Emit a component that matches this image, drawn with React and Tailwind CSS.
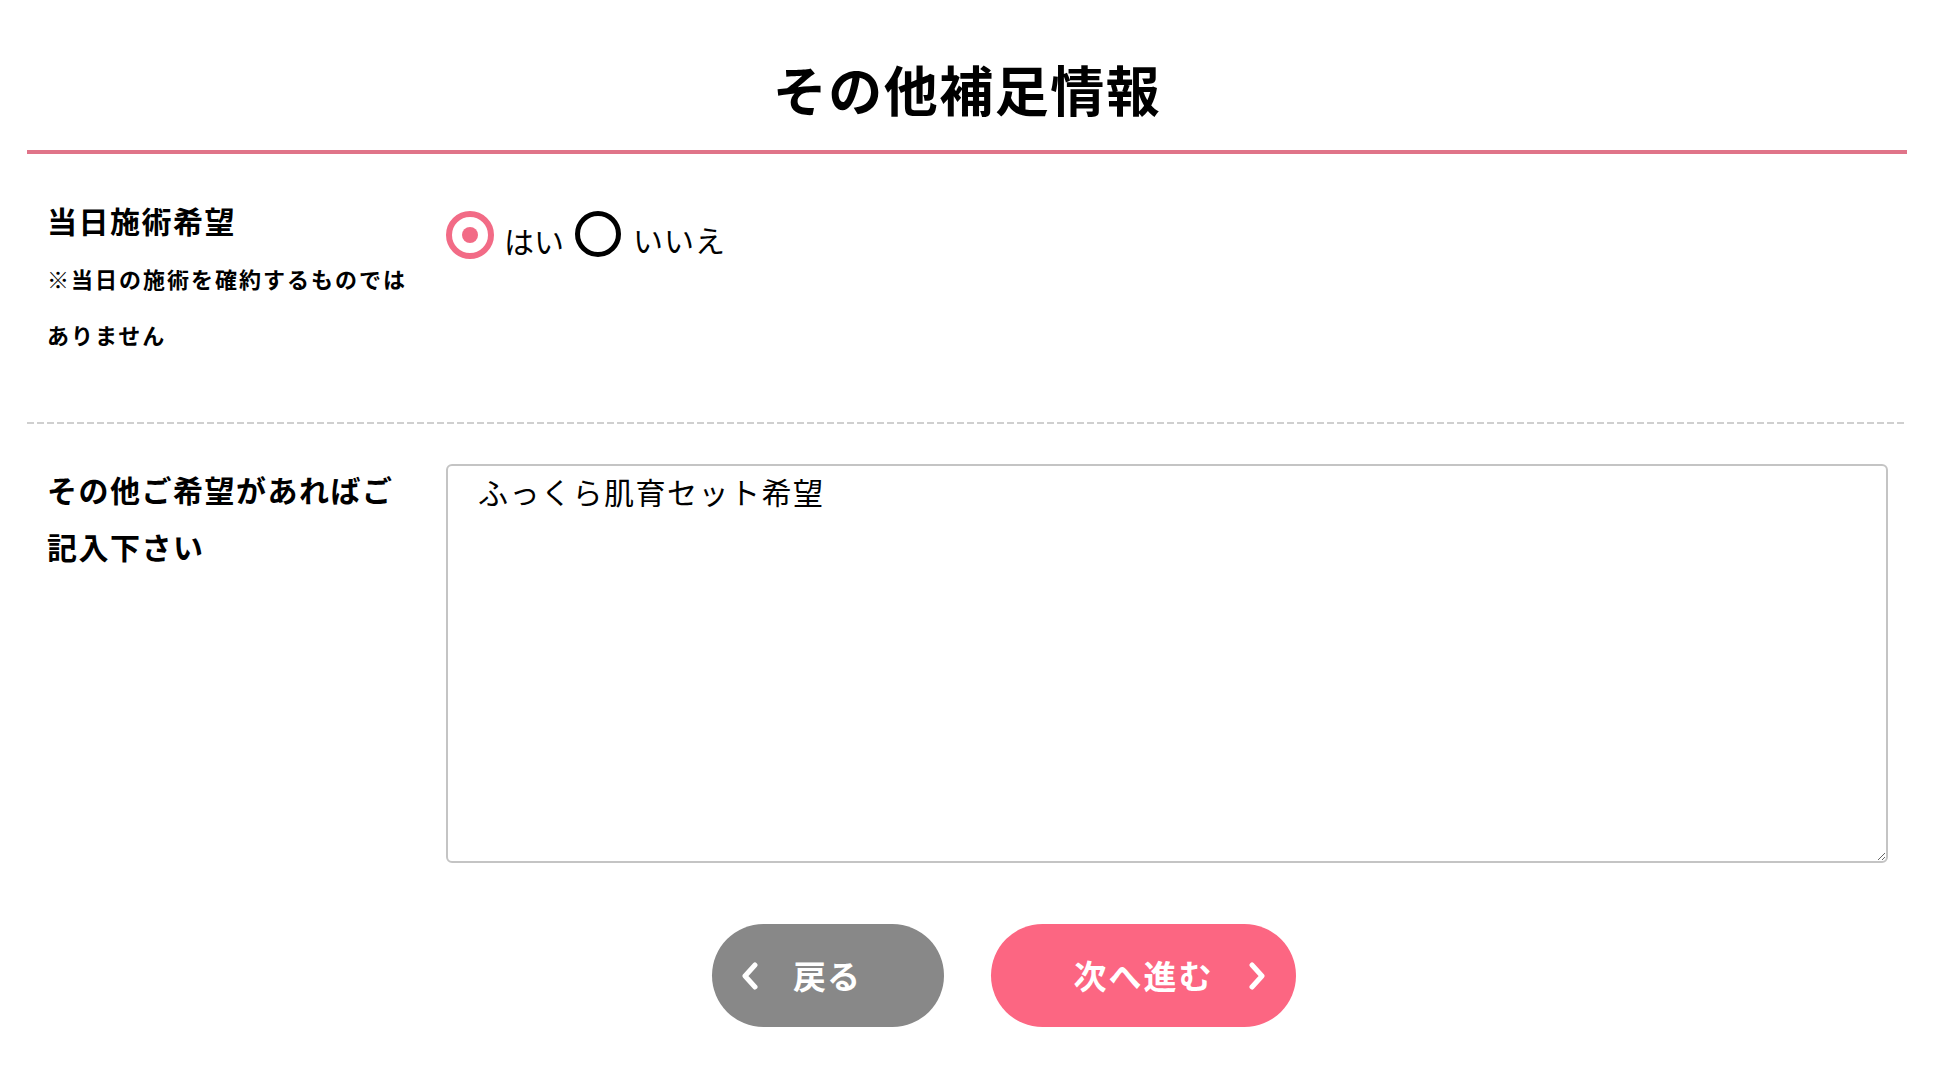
import React from "react";

const font = { fontFamily: '"Noto Sans CJK JP", "Noto Sans", sans-serif' };

function Chevron({ dir }) {
  return (
    <svg width="22" height="28" viewBox="0 0 22 28" fill="none">
      {dir === "left" ? (
        <polyline points="16,3 6,14 16,25" stroke="#fff" strokeWidth="5" strokeLinecap="round" strokeLinejoin="round" />
      ) : (
        <polyline points="6,3 16,14 6,25" stroke="#fff" strokeWidth="5" strokeLinecap="round" strokeLinejoin="round" />
      )}
    </svg>
  );
}

export default function App() {
  return (
    <div className="min-h-[1070px] bg-white text-black" style={font}>
      <div className="ml-[27px] w-[1880px]">
        <h1 className="pt-[48px] text-center text-[54px] font-bold leading-[81px] tracking-[1.5px]">
          その他補足情報
        </h1>
        <div className="mt-[21px] h-[4px] bg-[#e07489]" />

        <div className="flex pt-[38px] pb-[60px] pl-[20px] pr-[19px]">
          <div className="w-[399px] shrink-0">
            <div className="text-[30px] font-bold leading-[57px] tracking-[1.5px]">当日施術希望</div>
            <div className="mt-[1px] text-[22px] font-bold leading-[56px] tracking-[2px]">
              ※当日の施術を確約するものでは
              <br />
              ありません
            </div>
          </div>
          <div className="flex items-start pt-[19px]">
            <label className="flex items-center gap-[10px]">
              <span className="flex h-[48px] w-[48px] items-center justify-center rounded-full border-[6px] border-[#f26b86]">
                <span className="h-[16px] w-[16px] rounded-full bg-[#f26b86]" />
              </span>
              <span className="pt-[10px] text-[30px] leading-[30px]">はい</span>
            </label>
            <label className="ml-[11px] flex items-center gap-[12px]">
              <span className="h-[46px] w-[46px] rounded-full border-[5px] border-black" />
              <span className="pt-[10px] text-[30px] leading-[30px] tracking-[1px]">いいえ</span>
            </label>
          </div>
        </div>

        <div className="h-[2px] bg-[repeating-linear-gradient(to_right,#cfcfcf_0px,#cfcfcf_7px,transparent_7px,transparent_10px)]" />

        <div className="flex pt-[37px] pl-[20px] pr-[19px]">
          <div className="w-[399px] shrink-0 text-[30px] font-bold leading-[57px] tracking-[1.5px]">
            その他ご希望があればご
            <br />
            記入下さい
          </div>
          <textarea
            className="mt-[3px] h-[399px] flex-1 rounded-[6px] border-2 border-[#c4c4c4] pl-[30px] pt-[3px] text-[30px] leading-[45px] tracking-[1.5px] text-black outline-none"
            style={font}
            defaultValue="ふっくら肌育セット希望"
          />
        </div>

        <div className="flex justify-center gap-[47px] pl-[74px] pt-[61px]">
          <button className="relative flex h-[103px] w-[232px] items-center justify-center rounded-full bg-[#888888] text-[33px] font-bold tracking-[1px] text-white">
            <span className="absolute left-[27px] top-1/2 -translate-y-1/2">
              <Chevron dir="left" />
            </span>
            <span className="pr-[2px]">戻る</span>
          </button>
          <button className="relative flex h-[103px] w-[305px] items-center justify-center rounded-full bg-[#fc6682] text-[33px] font-bold tracking-[2px] text-white">
            <span>次へ進む</span>
            <span className="absolute right-[28px] top-1/2 -translate-y-1/2">
              <Chevron dir="right" />
            </span>
          </button>
        </div>
      </div>
    </div>
  );
}
